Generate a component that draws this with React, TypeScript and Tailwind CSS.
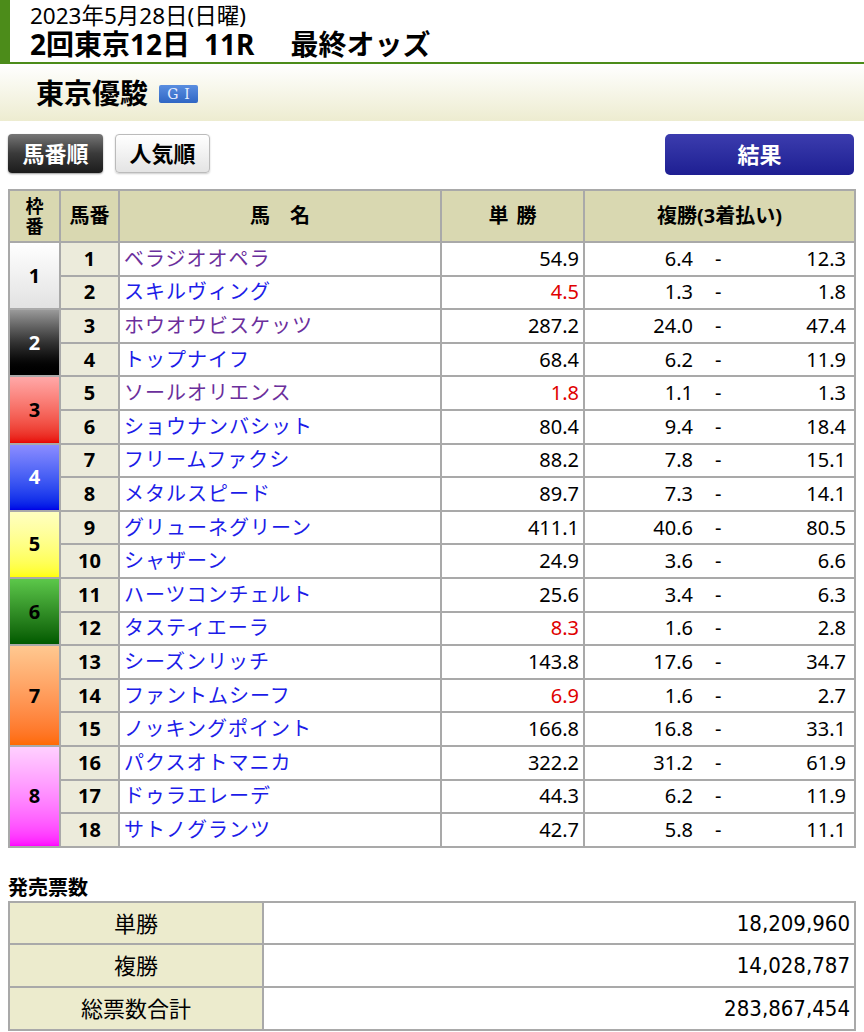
const horses: { no: number; name: string; win: string; lo: string; hi: string; visited?: boolean; fav?: boolean }[] = [
  { no: 1, name: "ベラジオオペラ", win: "54.9", lo: "6.4", hi: "12.3", visited: true },
  { no: 2, name: "スキルヴィング", win: "4.5", lo: "1.3", hi: "1.8", fav: true },
  { no: 3, name: "ホウオウビスケッツ", win: "287.2", lo: "24.0", hi: "47.4", visited: true },
  { no: 4, name: "トップナイフ", win: "68.4", lo: "6.2", hi: "11.9" },
  { no: 5, name: "ソールオリエンス", win: "1.8", lo: "1.1", hi: "1.3", visited: true, fav: true },
  { no: 6, name: "ショウナンバシット", win: "80.4", lo: "9.4", hi: "18.4" },
  { no: 7, name: "フリームファクシ", win: "88.2", lo: "7.8", hi: "15.1" },
  { no: 8, name: "メタルスピード", win: "89.7", lo: "7.3", hi: "14.1" },
  { no: 9, name: "グリューネグリーン", win: "411.1", lo: "40.6", hi: "80.5" },
  { no: 10, name: "シャザーン", win: "24.9", lo: "3.6", hi: "6.6" },
  { no: 11, name: "ハーツコンチェルト", win: "25.6", lo: "3.4", hi: "6.3" },
  { no: 12, name: "タスティエーラ", win: "8.3", lo: "1.6", hi: "2.8", fav: true },
  { no: 13, name: "シーズンリッチ", win: "143.8", lo: "17.6", hi: "34.7" },
  { no: 14, name: "ファントムシーフ", win: "6.9", lo: "1.6", hi: "2.7", fav: true },
  { no: 15, name: "ノッキングポイント", win: "166.8", lo: "16.8", hi: "33.1" },
  { no: 16, name: "パクスオトマニカ", win: "322.2", lo: "31.2", hi: "61.9" },
  { no: 17, name: "ドゥラエレーデ", win: "44.3", lo: "6.2", hi: "11.9" },
  { no: 18, name: "サトノグランツ", win: "42.7", lo: "5.8", hi: "11.1" },
];

// first horse of each waku -> waku number, rows, cell style
const waku: Record<number, { waku: number; span: number; cls: string }> = {
  1: { waku: 1, span: 2, cls: "bg-gradient-to-b from-white to-[#e2e2e2] text-black" },
  3: { waku: 2, span: 2, cls: "bg-gradient-to-b from-[#9a9a9a] via-[#333] to-black text-white" },
  5: { waku: 3, span: 2, cls: "bg-gradient-to-b from-[#ffa8a8] to-[#e80000] text-black" },
  7: { waku: 4, span: 2, cls: "bg-gradient-to-b from-[#8c8cff] to-[#0000e6] text-white" },
  9: { waku: 5, span: 2, cls: "bg-gradient-to-b from-[#ffffc0] to-[#ffff00] text-black" },
  11: { waku: 6, span: 2, cls: "bg-gradient-to-b from-[#5cc84a] to-[#005a00] text-black" },
  13: { waku: 7, span: 3, cls: "bg-gradient-to-b from-[#ffc890] to-[#ff6a00] text-black" },
  16: { waku: 8, span: 3, cls: "bg-gradient-to-b from-[#ffd0ff] to-[#ff00ff] text-black" },
};

const sales = [
  { label: "単勝", value: "18,209,960" },
  { label: "複勝", value: "14,028,787" },
  { label: "総票数合計", value: "283,867,454" },
];

const cell = "border-2 border-[#a9a9a9]";

export default function App() {
  return (
    <div className="w-[864px] bg-white text-black font-['Noto_Sans','Noto_Sans_CJK_JP',sans-serif]">
      {/* page title */}
      <div className="flex h-[64px] border-b-2 border-[#4c8c1a]">
        <div className="w-[10px] bg-[#4c8c1a]" />
        <div className="pl-[20px]">
          <div className="text-[22.5px] leading-[25px] pt-[3px]">2023年5月28日(日曜)</div>
          <div className="text-[28px] font-bold leading-[32px]">
            2回東京12日<span className="ml-[14px]">11R</span>
            <span className="ml-[36px]">最終オッズ</span>
          </div>
        </div>
      </div>

      {/* race name */}
      <div className="flex items-center h-[57px] pl-[36px] bg-gradient-to-b from-white to-[#edecd0]">
        <span className="text-[28px] font-bold leading-none">東京優駿</span>
        <span className="ml-[11px] mt-[3px] flex items-center justify-center w-[39px] h-[18px] rounded-[2px] bg-gradient-to-b from-[#5a8ee0] to-[#2f66c4] text-[#e8eeff] text-[14px] leading-none tracking-[6px] pl-[6px] font-['DejaVu_Serif',serif]">
          GI
        </span>
      </div>

      {/* buttons */}
      <div className="flex justify-between px-[8px] mt-[13px]">
        <div className="flex gap-[12px]">
          <button className="w-[95px] h-[39px] rounded-[4px] bg-gradient-to-b from-[#777] via-[#3a3a3a] to-[#1c1c1c] text-white text-[22px] font-bold shadow-[0_1px_2px_rgba(0,0,0,0.4)]">
            馬番順
          </button>
          <button className="w-[95px] h-[39px] rounded-[4px] border border-[#bbb] bg-gradient-to-b from-white to-[#e4e4e4] text-black text-[22px] font-bold shadow-[0_1px_2px_rgba(0,0,0,0.2)]">
            人気順
          </button>
        </div>
        <button className="w-[189px] h-[41px] mr-[2px] rounded-[5px] bg-gradient-to-b from-[#3c3cae] to-[#1e1e92] text-white text-[22px] font-bold">
          結果
        </button>
      </div>

      {/* odds table */}
      <div className="px-[8px] mt-[14px]">
        <table className="w-full border-collapse table-fixed">
          <colgroup>
            <col className="w-[51px]" />
            <col className="w-[59px]" />
            <col className="w-[322px]" />
            <col className="w-[143px]" />
            <col />
          </colgroup>
          <thead>
            <tr className="bg-[#d9d8b1] font-bold h-[52px]">
              <th className={`${cell} text-[18px] leading-[20px]`}>
                <div>枠</div>
                <div>番</div>
              </th>
              <th className={`${cell} text-[20px]`}>馬番</th>
              <th className={`${cell} text-[20px]`}>馬　名</th>
              <th className={`${cell} text-[20px]`}>
                単<span className="ml-[8px]">勝</span>
              </th>
              <th className={`${cell} text-[20px]`}>複勝(3着払い)</th>
            </tr>
          </thead>
          <tbody>
            {horses.map((h) => (
              <tr key={h.no} className="h-[33.6px] text-[20px] leading-[26px]">
                {waku[h.no] && (
                  <td rowSpan={waku[h.no].span} className={`${cell} ${waku[h.no].cls} text-center font-bold`}>
                    {waku[h.no].waku}
                  </td>
                )}
                <td className={`${cell} bg-[#ecebdb] text-center font-bold`}>{h.no}</td>
                <td className={`${cell} pl-[4px] tracking-[1px] ${h.visited ? "text-[#6b2f9c]" : "text-[#1c1ce8]"}`}>
                  {h.name}
                </td>
                <td className={`${cell} text-right pr-[4px] ${h.fav ? "text-[#e00000]" : ""}`}>{h.win}</td>
                <td className={`${cell} pr-[8px]`}>
                  <div className="flex">
                    <span className="w-[108px] text-right">{h.lo}</span>
                    <span className="ml-[22px]">-</span>
                    <span className="flex-1 text-right">{h.hi}</span>
                  </div>
                </td>
              </tr>
            ))}
          </tbody>
        </table>
      </div>

      {/* sales */}
      <div className="px-[8px] mt-[27px] pb-[2px]">
        <div className="text-[20px] font-bold leading-[26px]">発売票数</div>
        <table className="w-full border-collapse table-fixed">
          <colgroup>
            <col className="w-[254px]" />
            <col />
          </colgroup>
          <tbody>
            {sales.map((s) => (
              <tr key={s.label} className="h-[42.7px] text-[22px]">
                <td className={`${cell} bg-[#ecebcd] text-center`}>{s.label}</td>
                <td className={`${cell} text-right pr-[4px] font-['Liberation_Sans_Narrow','DejaVu_Sans_Condensed','Noto_Sans',sans-serif]`}>
                  {s.value}
                </td>
              </tr>
            ))}
          </tbody>
        </table>
      </div>
    </div>
  );
}
